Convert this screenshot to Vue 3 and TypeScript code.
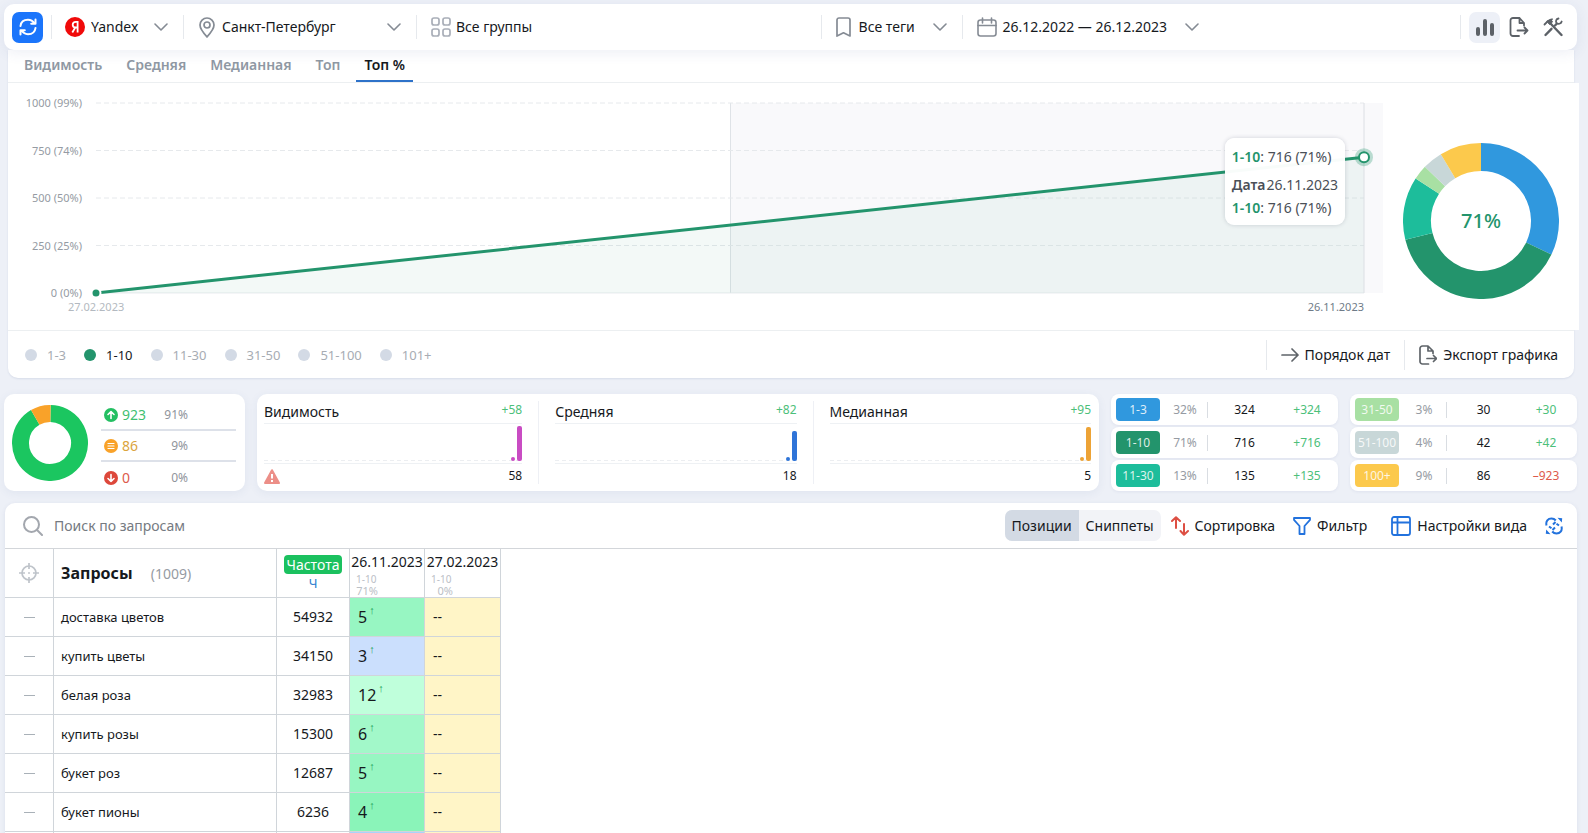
<script setup lang="ts">
import { ref } from 'vue'

const tabs = ['Видимость', 'Средняя', 'Медианная', 'Топ', 'Топ %']
const activeTab = ref('Топ %')

const axis = ['1000 (99%)', '750 (74%)', '500 (50%)', '250 (25%)', '0 (0%)']
const gridLines = ['0%', '25%', '50%', '75%']

const ranges = ['1-3', '1-10', '11-30', '31-50', '51-100', '101+']
const activeRange = ref('1-10')

interface Slice { color: string; from: number; to: number }

function arc(s: Slice, r: number): string {
  const point = (deg: number) => {
    const a = ((deg - 90) * Math.PI) / 180
    return `${(r * Math.cos(a)).toFixed(2)} ${(r * Math.sin(a)).toFixed(2)}`
  }
  return `M${point(s.from)} A${r} ${r} 0 ${s.to - s.from > 180 ? 1 : 0} 1 ${point(s.to)}`
}

const topSlices: Slice[] = [
  { color: '#3098de', from: 0, to: 115.5 },
  { color: '#23946c', from: 115.5, to: 256 },
  { color: '#1dbd9b', from: 256, to: 303 },
  { color: '#a8e0a3', from: 303, to: 314 },
  { color: '#c8d7d8', from: 314, to: 329 },
  { color: '#fcc94c', from: 329, to: 360 },
]
const changeSlices: Slice[] = [
  { color: '#1bc660', from: 1, to: 330 },
  { color: '#f9a229', from: 330, to: 361 },
]

const changes = [
  { kind: 'up', value: 923, share: '91%' },
  { kind: 'same', value: 86, share: '9%' },
  { kind: 'down', value: 0, share: '0%' },
]

const metrics = [
  { name: 'Видимость', delta: '+58', value: 58, height: 35, color: '#c94cc3', warn: true },
  { name: 'Средняя', delta: '+82', value: 18, height: 30, color: '#2f74d8', warn: false },
  { name: 'Медианная', delta: '+95', value: 5, height: 34, color: '#eda336', warn: false },
]

const groups = [
  [
    { label: '1-3', color: '#3098de', share: '32%', count: 324, delta: '+324' },
    { label: '1-10', color: '#23946c', share: '71%', count: 716, delta: '+716' },
    { label: '11-30', color: '#1dbd9b', share: '13%', count: 135, delta: '+135' },
  ],
  [
    { label: '31-50', color: '#a8e0a3', share: '3%', count: 30, delta: '+30' },
    { label: '51-100', color: '#c8d7d8', share: '4%', count: 42, delta: '+42' },
    { label: '100+', color: '#fcc94c', share: '9%', count: 86, delta: '–923' },
  ],
]

const mode = ref('Позиции')
const search = ref('')

const rows = [
  { query: 'доставка цветов', freq: 54932, pos: 5, color: '#97f6c2' },
  { query: 'купить цветы', freq: 34150, pos: 3, color: '#cbdffd' },
  { query: 'белая роза', freq: 32983, pos: 12, color: '#bfffdb' },
  { query: 'купить розы', freq: 15300, pos: 6, color: '#a2f8c9' },
  { query: 'букет роз', freq: 12687, pos: 5, color: '#97f6c2' },
  { query: 'букет пионы', freq: 6236, pos: 4, color: '#8af4b9' },
]
</script>

<template>
  <div class="page">
    <header class="topbar">
      <button class="refresh" type="button" aria-label="Обновить">
        <svg width="20" height="20" viewBox="0 0 20 20" fill="none" stroke="#fff" stroke-width="2" stroke-linecap="round" stroke-linejoin="round">
          <path d="M2.5 9C3 5 6 2.8 10 2.8c2.8 0 5 1.400 6.300 3.600M17.500 2.500v4.300h-4.300M17.500 11c-.5 4-3.500 6.200-7.500 6.200-2.800 0-5-1.400-6.300-3.600M2.500 17.500v-4.300h4.300" />
        </svg>
      </button>
      <i class="sep first"></i>
      <label class="picker engine">
        <svg width="20" height="20" viewBox="0 0 20 20">
          <circle cx="10" cy="10" r="10" fill="#f00a0a" />
          <path d="M12.600 15.500V4.800h-1.700c-2 0-3.200 1.100-3.200 2.900 0 1.700 1 2.800 3 2.800h1.700M10.300 10.500l-3 5" fill="none" stroke="#fff" stroke-width="1.800" />
        </svg>
        <select aria-label="Поисковая система"><option>Yandex</option></select>
        <svg class="chev" width="14" height="8" viewBox="0 0 14 8"><path d="M1 1l6 6 6-6" /></svg>
      </label>
      <i class="sep"></i>
      <label class="picker region">
        <svg width="16" height="21" viewBox="0 0 16 21" fill="none" stroke="#858b94" stroke-width="1.700">
          <path d="M8 19.800C4 15.500 1 11.800 1 8a7 7 0 0 1 14 0c0 3.800-3 7.500-7 11.800z" /><circle cx="8" cy="8" r="3" />
        </svg>
        <select aria-label="Регион"><option>Санкт-Петербург</option></select>
        <svg class="chev" width="14" height="8" viewBox="0 0 14 8"><path d="M1 1l6 6 6-6" /></svg>
      </label>
      <i class="sep"></i>
      <button class="plain groups" type="button">
        <svg width="20" height="20" viewBox="0 0 20 20" fill="none" stroke="#a9aeb8" stroke-width="1.700">
          <rect x="1" y="1" width="7" height="7" rx="2" /><rect x="12" y="1" width="7" height="7" rx="2" />
          <rect x="1" y="12" width="7" height="7" rx="2" /><rect x="12" y="12" width="7" height="7" rx="2" />
        </svg>
        Все группы
      </button>
      <div class="right-filters">
        <i class="sep"></i>
        <label class="picker tags">
          <svg width="15" height="20" viewBox="0 0 15 20" fill="none" stroke="#858b94" stroke-width="1.700" stroke-linejoin="round">
            <path d="M1 19V3a2 2 0 0 1 2-2h9a2 2 0 0 1 2 2v16l-6.500-3.200z" />
          </svg>
          <select aria-label="Теги"><option>Все теги</option></select>
          <svg class="chev" width="14" height="8" viewBox="0 0 14 8"><path d="M1 1l6 6 6-6" /></svg>
        </label>
        <i class="sep"></i>
        <button class="plain dates" type="button">
          <svg width="20" height="20" viewBox="0 0 20 20" fill="none" stroke="#858b94" stroke-width="1.600" stroke-linecap="round">
            <rect x="1" y="3" width="18" height="16" rx="2.500" /><path d="M1 8.500h18M5.500 1v5M14.500 1v5" />
          </svg>
          26.12.2022 — 26.12.2023
          <svg class="chev" width="14" height="8" viewBox="0 0 14 8"><path d="M1 1l6 6 6-6" /></svg>
        </button>
      </div>
      <div class="actions">
        <i class="sep"></i>
        <button class="tool on" type="button" aria-label="График">
          <svg width="20" height="20" viewBox="0 0 20 20" stroke="#5c6167" stroke-width="4" stroke-linecap="round"><path d="M3 12v5M10 4v13M17 8v9" /></svg>
        </button>
        <button class="tool" type="button" aria-label="Экспорт">
          <svg width="20" height="20" viewBox="0 0 20 20" fill="none" stroke="#5c6167" stroke-width="1.800" stroke-linecap="round" stroke-linejoin="round">
            <path d="M10 19H4a2.500 2.500 0 0 1-2.500-2.500v-13A2.500 2.500 0 0 1 4 1h6.500L15 6v2.500M10.500 1v5H15M8.500 13.500h10M15.500 10.500l3 3-3 3" />
          </svg>
        </button>
        <button class="tool" type="button" aria-label="Инструменты">
          <svg width="20" height="20" viewBox="0 0 20 20" fill="none" stroke="#5c6167" stroke-linecap="round">
            <path d="M7.500 6.500l11 11.500" stroke-width="2.400" /><path d="M1.500 7.500L4.500 4.500 9 2.200" stroke-width="1.800" /><path d="M4 4.500l2.500 3L9.500 5 8 2.500z" fill="#5c6167" stroke-width="1" />
            <path d="M2.500 18l6-6.200M12 8.500l1.500-1.500" stroke-width="2.400" /><path d="M15.500 1.500c-2.500.5-3 2.800-2 4.500 1.500 1.500 4.500 1 5.200-1.500" stroke-width="1.800" />
          </svg>
        </button>
      </div>
    </header>

    <section class="chart-card">
      <nav class="tabs">
        <button v-for="t in tabs" :key="t" type="button" :class="{ on: t === activeTab }" @click="activeTab = t">{{ t }}</button>
      </nav>
      <div class="chart">
        <div class="axis"><span v-for="a in axis" :key="a">{{ a }}</span></div>
        <div class="plot">
          <div class="band"></div>
          <svg class="lines" width="100%" height="190">
            <line v-for="g in gridLines" :key="g" x1="0" x2="100%" :y1="g" :y2="g" stroke="#e6e9ec" stroke-dasharray="5 3" />
            <line x1="0" x2="100%" y1="100%" y2="100%" stroke="#e9ecef" />
            <svg width="100%" height="100%" viewBox="0 0 100 100" preserveAspectRatio="none"><path d="M0 100L100 28.500V100z" fill="#23946c" fill-opacity=".055" /></svg>
            <line x1="100%" x2="100%" y1="0" y2="100%" stroke="#dcdfe4" />
            <line x1="0" x2="100%" y1="100%" y2="28.500%" stroke="#23946c" stroke-width="3" />
            <circle cx="0" cy="100%" r="4.500" fill="#23946c" stroke="#fff" stroke-width="2" />
            <circle cx="100%" cy="28.500%" r="9" fill="#23946c" fill-opacity=".3" />
            <circle cx="100%" cy="28.500%" r="5" fill="#fff" stroke="#23946c" stroke-width="2" />
          </svg>
          <div class="tip">
            <p><b>1-10</b>: 716 (71%)</p>
            <p class="day"><strong>Дата</strong><span>26.11.2023</span></p>
            <p><b>1-10</b>: 716 (71%)</p>
          </div>
          <div class="dates-axis"><span>27.02.2023</span><span>26.11.2023</span></div>
        </div>
        <svg class="donut" width="156" height="156" viewBox="-78 -78 156 156">
          <path v-for="s in topSlices" :key="s.color" :d="arc(s, 64)" fill="none" :stroke="s.color" stroke-width="28" />
          <text y="7" text-anchor="middle">71%</text>
        </svg>
      </div>
      <div class="legend">
        <button v-for="r in ranges" :key="r" type="button" class="range" :class="{ on: r === activeRange }" @click="activeRange = r"><i></i>{{ r }}</button>
        <div class="legend-actions">
          <i class="sep"></i>
          <button class="plain" type="button">
            <svg width="18" height="14" viewBox="0 0 18 14" fill="none" stroke="#5f6469" stroke-width="1.700" stroke-linecap="round" stroke-linejoin="round"><path d="M1 7h16M11 1l6 6-6 6" /></svg>
            Порядок дат
          </button>
          <i class="sep"></i>
          <button class="plain" type="button">
            <svg width="18" height="20" viewBox="0 0 18 20" fill="none" stroke="#5f6469" stroke-width="1.700" stroke-linecap="round" stroke-linejoin="round">
              <path d="M9.500 19H3.500A2.500 2.500 0 0 1 1 16.500v-13A2.500 2.500 0 0 1 3.500 1H9l5 5v2.500M9 1v5h5M8 13.500h9M14.500 10.500l3 3-3 3" />
            </svg>
            Экспорт графика
          </button>
        </div>
      </div>
    </section>

    <section class="stats">
      <div class="card changes">
        <svg width="76" height="76" viewBox="-38 -38 76 76">
          <path v-for="s in changeSlices" :key="s.color" :d="arc(s, 29.5)" fill="none" :stroke="s.color" stroke-width="17" />
        </svg>
        <ul>
          <li v-for="c in changes" :key="c.kind" :class="c.kind">
            <svg width="14" height="14" viewBox="0 0 14 14" fill="none" stroke="#fff" stroke-width="1.600" stroke-linecap="round" stroke-linejoin="round">
              <circle class="disc" cx="7" cy="7" r="7" stroke="none" />
              <path v-if="c.kind === 'up'" d="M7 10.500v-7M4 6.500l3-3 3 3" />
              <path v-else-if="c.kind === 'down'" d="M7 3.500v7M4 7.500l3 3 3-3" />
              <path v-else d="M4 4.500h6M4 7h6M4 9.500h6" stroke-width="1.200" />
            </svg>
            <span>{{ c.value }}</span><em>{{ c.share }}</em>
          </li>
        </ul>
      </div>

      <div class="card metrics">
        <div v-for="m in metrics" :key="m.name" class="metric">
          <div class="head"><h3>{{ m.name }}</h3><span>{{ m.delta }}</span></div>
          <div class="spark">
            <i class="dot" :style="{ background: m.color }"></i>
            <i class="bar" :style="{ background: m.color, height: m.height + 'px' }"></i>
          </div>
          <div class="foot">
            <svg v-if="m.warn" width="16" height="15" viewBox="0 0 16 15">
              <path d="M8 1.200L15 14H1z" fill="#ec8f88" stroke="#ec8f88" stroke-width="2" stroke-linejoin="round" />
              <path d="M8 5v4.500M8 11v2" stroke="#fff" stroke-width="2" />
            </svg>
            <span>{{ m.value }}</span>
          </div>
        </div>
      </div>

      <div v-for="(g, i) in groups" :key="i" class="group">
        <div v-for="x in g" :key="x.label" class="pill">
          <b :style="{ background: x.color }">{{ x.label }}</b>
          <em>{{ x.share }}</em>
          <strong>{{ x.count }}</strong>
          <span :class="{ minus: x.delta.startsWith('–') }">{{ x.delta }}</span>
        </div>
      </div>
    </section>

    <section class="queries">
      <div class="toolbar">
        <svg width="20" height="20" viewBox="0 0 20 20" fill="none" stroke="#a3a7ae" stroke-width="2" stroke-linecap="round"><circle cx="8.500" cy="8.500" r="7.500" /><path d="M14 14l5 5" /></svg>
        <input v-model="search" type="text" placeholder="Поиск по запросам" aria-label="Поиск по запросам" />
        <div class="switch">
          <button v-for="m in ['Позиции', 'Сниппеты']" :key="m" type="button" :class="{ on: m === mode }" @click="mode = m">{{ m }}</button>
        </div>
        <button class="plain sort" type="button">
          <svg width="18" height="20" viewBox="0 0 18 20" fill="none" stroke="#dd4f43" stroke-width="2" stroke-linecap="round" stroke-linejoin="round"><path d="M5 12V1.500M1 5l4-3.700L9 5M13 8v10.500M9.500 15l3.500 3.700L17 15" /></svg>
          Сортировка
        </button>
        <button class="plain filter" type="button">
          <svg width="18" height="18" viewBox="0 0 18 18" fill="none" stroke="#2272dd" stroke-width="1.800" stroke-linejoin="round"><path d="M1 1h16v1.800L11.500 9v8h-5V9L1 2.800z" /></svg>
          Фильтр
        </button>
        <button class="plain view" type="button">
          <svg width="20" height="20" viewBox="0 0 20 20" fill="none" stroke="#2272dd" stroke-width="1.800"><rect x="1" y="1" width="18" height="18" rx="2" /><path d="M1 6.500h18M6.500 1v18" /></svg>
          Настройки вида
        </button>
        <button class="plain" type="button" aria-label="Обновить вид">
          <svg width="18" height="18" viewBox="0 0 18 18" fill="none" stroke="#2272dd" stroke-width="2">
            <path d="M1.500 8.500C.5 4 3 1.500 6.500 1.500c2 0 3.300.8 4.300 2M4 9.500l2.500 1.800M8 7.500L10.500 5M16.500 9.500c1 4.500-1.500 7-5 7-2 0-3.300-.8-4.300-2M14 8.500l-2.500-1.800M10 10.500L7.500 13" />
            <path d="M12.500.8l4.700.4-.4 4.300zM5.500 17.200l-4.700-.4.400-4.300z" fill="#2272dd" stroke="none" />
          </svg>
        </button>
      </div>
      <table>
        <thead>
          <tr>
            <th class="c-mark">
              <svg width="20" height="20" viewBox="0 0 20 20" fill="none" stroke="#bfc4ca" stroke-width="1.700"><circle cx="10" cy="10" r="7" /><path d="M10 0v6M10 14v6M0 10h6M14 10h6" /><circle cx="10" cy="10" r="1" fill="#c3c7cc" stroke="none" /></svg>
            </th>
            <th class="c-query">Запросы <span>(1009)</span></th>
            <th class="c-freq"><b>Частота</b><a href="#">Ч</a></th>
            <th class="c-day first">26.11.2023<small>1-10</small><small class="pc">71%</small></th>
            <th class="c-day">27.02.2023<small>1-10</small><small class="pc">0%</small></th>
          </tr>
        </thead>
        <tbody>
          <tr v-for="r in rows" :key="r.query">
            <td class="c-mark"><i></i></td>
            <td class="c-query">{{ r.query }}</td>
            <td class="c-freq">{{ r.freq }}</td>
            <td class="c-pos" :style="{ background: r.color }">{{ r.pos }}<sup>↑</sup></td>
            <td class="c-none">--</td>
          </tr>
          <tr>
            <td class="c-mark"></td>
            <td class="c-query"></td>
            <td class="c-freq"></td>
            <td class="c-pos next"></td>
            <td class="c-none"></td>
          </tr>
        </tbody>
      </table>
    </section>
  </div>
</template>

<style>
body { overflow: hidden; background: #edf0f7; }
</style>

<style scoped>
* { box-sizing: border-box; margin: 0; }
.page { height: 100vh; overflow: hidden; padding: 4px 11px 0 4px; background: #edf0f7; font: 14px/20px "Noto Sans", "Open Sans", sans-serif; color: #16191d; }
button, select, input { font: inherit; color: inherit; border: 0; background: none; padding: 0; }
button { cursor: pointer; white-space: nowrap; }
svg { display: block; flex: none; }
em { font-style: normal; }

.topbar { position: relative; z-index: 2; display: flex; align-items: center; height: 46px; padding: 0 14px 0 8px; border-radius: 10px; background: #fff; box-shadow: 0 3px 14px rgba(60, 80, 140, .09); }
.refresh { display: grid; place-items: center; width: 31px; height: 31px; border-radius: 7px; background: #1b75fb; }
.sep { flex: none; width: 1px; height: 24px; margin: 0 15px; background: #e6e9ed; }
.sep.first { margin: 0 13px 0 8px; }
.picker { position: relative; display: flex; align-items: center; gap: 7px; }
.picker select { flex: 1; min-width: 0; appearance: none; outline: 0; }
.engine { width: 103px; gap: 6px; }
.region { width: 202px; }
.tags { width: 111px; gap: 8px; }
.chev { fill: none; stroke: #858b94; stroke-width: 1.600; stroke-linecap: round; stroke-linejoin: round; }
.picker .chev { position: absolute; right: 0; pointer-events: none; }
.plain { display: flex; align-items: center; gap: 6px; }
.groups { margin-left: -1px; gap: 5px; }
.right-filters, .actions { display: flex; align-items: center; }
.right-filters { margin-left: auto; }
.right-filters .sep { margin-right: 14px; }
.dates .chev { margin-left: 12px; }
.actions { margin-left: 246px; gap: 3px; }
.actions .sep { margin-right: 5px; }
.tool { display: grid; place-items: center; width: 31px; height: 31px; border-radius: 7px; }
.tool.on { background: #edf0f7; }
.tool:last-child { width: 32px; margin-right: -6px; }

.chart-card { position: relative; margin: 0 3px 0 4px; border-radius: 0 0 10px 10px; background: #fff; box-shadow: 0 1px 2px rgba(60, 80, 140, .12); }
.tabs { display: flex; gap: 8px; height: 33px; padding-left: 8px; border-bottom: 1px solid #eceff1; }
.tabs button { padding: 0 8px; font-weight: 600; color: #8f98a3; border-bottom: 2px solid transparent; }
.tabs button.on { color: #16191d; border-color: #2e72c9; }
.chart { display: flex; align-items: flex-start; height: 247px; margin-right: -5px; padding: 20px 20px 0 0; background: #fff; }
.axis { display: flex; flex-direction: column; justify-content: space-between; width: 74px; height: 206px; margin-top: -8px; text-align: right; font-size: 11px; line-height: 16px; color: #959ba3; }
.plot { position: relative; flex: 1; height: 190px; margin-left: 14px; }
.band { position: absolute; top: 0; bottom: 0; left: 50%; right: -19px; background: #f9f9fb; border-left: 1px solid #dfe3e7; }
.lines { position: relative; overflow: visible; }
.tip { position: absolute; top: 35px; right: 19px; padding: 7px 7px 6px; border-radius: 9px; background: rgba(255, 255, 255, .97); box-shadow: 0 0 4px rgba(60, 70, 90, .22); line-height: 23px; color: #4a4f57; white-space: nowrap; }
.tip b { font-weight: 600; color: #23946c; }
.tip .day { margin-top: 5px; }
.tip strong { margin-right: 1px; font-weight: 600; }
.dates-axis { display: flex; justify-content: space-between; margin: 6px 0 0 -28px; font-size: 11px; line-height: 16px; color: #b3b9c0; }
.dates-axis span:last-child { color: #6f7b88; }
.donut { margin: 40px 0 0 39px; }
.donut text { font-size: 20px; font-weight: 500; fill: #23946c; }
.legend { display: flex; align-items: center; gap: 18px; height: 48px; padding: 0 16px 0 17px; border-top: 1px solid #eceff1; }
.range { display: flex; align-items: center; gap: 10px; font-size: 13px; color: #a7acb3; }
.range i { width: 12px; height: 12px; border-radius: 50%; background: #d3dae5; }
.range.on { color: #16191d; }
.range.on i { background: #23946c; }
.legend-actions { display: flex; align-items: center; margin-left: auto; }
.legend-actions .sep { height: 30px; margin: 0 14px; }

.stats { display: flex; gap: 12px; margin-top: 16px; height: 97px; }
.card { border-radius: 10px; background: #fff; box-shadow: 0 2px 10px rgba(60, 80, 140, .07); }
.changes { display: flex; align-items: center; gap: 13px; width: 241px; padding: 0 9px 0 8px; }
.changes ul { flex: 1; padding: 8px 0 0; list-style: none; }
.changes li { display: flex; align-items: center; height: 31px; padding-left: 3px; border-bottom: 2px solid #dde1e9; }
.changes li:last-child { border: 0; }
.changes span { flex: none; width: 40px; margin-left: 4px; }
.changes em { width: 26px; text-align: right; font-size: 12px; color: #8f949b; }
.up { color: #3fbf71; } .up .disc { fill: #24bf62; }
.same { color: #dba43c; } .same .disc { fill: #f9a229; }
.down { color: #dd5a4b; } .down .disc { fill: #dd483b; }

.metrics { display: flex; flex: 1; padding: 7px 8px 7px 7px; }
.metric { flex: 1 1 auto; }
.metric + .metric { margin-left: 16px; padding-left: 16px; border-left: 1px solid #eef0f5; }
.head { display: flex; justify-content: space-between; height: 23px; border-bottom: 1px solid #eef1f4; }
.head h3 { font-size: 14px; font-weight: 400; line-height: 22px; }
.head span { font-size: 12px; line-height: 17px; color: #4cc07a; }
.spark { display: flex; align-items: flex-end; justify-content: flex-end; gap: 2px; height: 40px; padding-bottom: 2px; border-bottom: 1px solid #eef1f4; background: repeating-linear-gradient(90deg, #eceef1 0 4px, transparent 4px 7px) 0 36px / 100% 1px no-repeat; }
.dot { width: 4px; height: 4px; border-radius: 50%; }
.bar { width: 5px; border-radius: 2px; }
.foot { display: flex; align-items: center; height: 24px; }
.foot span { margin-left: auto; font-size: 12px; }

.group { display: grid; gap: 2px; width: 227px; }
.pill { display: grid; grid-template-columns: 44px 48px 73px 52px; align-items: center; padding-left: 5px; border-radius: 8px; background: #fff; box-shadow: 0 1px 3px rgba(60, 80, 140, .08); font-size: 12px; text-align: center; }
.pill b { height: 23px; border-radius: 4px; font-weight: 400; line-height: 23px; color: rgba(255, 255, 255, .85); }
.pill em { height: 16px; padding-left: 3px; border-right: 1px solid #d9dde2; line-height: 16px; color: #969ba3; }
.pill strong { font-weight: 400; }
.pill span { color: #4cc07a; }
.pill span.minus { color: #dd5a4b; }

.queries { margin: 12px 0 0 1px; border-radius: 10px 10px 0 0; background: #fff; box-shadow: 0 1px 4px rgba(60, 80, 140, .1); }
.toolbar { display: flex; align-items: center; height: 46px; padding: 0 14px 0 18px; border-bottom: 1px solid #d3d6da; }
.toolbar input { flex: 1; margin-left: 11px; outline: 0; }
.toolbar input::placeholder { color: #757a81; opacity: 1; }
.switch { display: flex; overflow: hidden; height: 31px; border-radius: 7px; background: #f2f3f7; }
.switch button { padding: 0 7px; }
.switch .on { background: #d3dae4; }
.sort { margin-left: 10px; }
.filter { margin-left: 18px; }
.view { margin: 0 18px 0 24px; }

table { width: 496px; table-layout: fixed; border-collapse: separate; border-spacing: 0; }
th, td { padding: 0; border-right: 1px solid #d0d5da; border-bottom: 1px solid #d0d5da; font-weight: 400; }
th { height: 49px; }
td { height: 39px; }
.c-mark { width: 49px; }
.c-mark svg, .c-mark i { display: block; margin: 0 auto; }
.c-mark i { width: 11px; height: 1px; background: #a9b1b8; }
.c-query { width: 223px; padding-left: 7px; text-align: left; font-size: 13px; }
th.c-query { font-size: 16px; font-weight: 700; }
th span { margin-left: 14px; font-size: 14px; font-weight: 400; color: #969ba3; }
.c-freq { width: 73px; text-align: center; }
.c-freq b { display: block; width: 58px; margin: 0 auto; border-radius: 4px; background: #1bc15f; font-weight: 400; line-height: 19px; color: #fff; }
.c-freq a { display: block; font-size: 13px; line-height: 18px; color: #2f7fd0; text-decoration: none; }
.c-day { padding-top: 3px; vertical-align: top; text-align: center; }
.c-day.first { width: 75px; }
.c-day small { display: block; margin-top: 2px; padding-left: 6px; font-size: 10px; line-height: 11px; color: #bbc0c6; text-align: left; }
.c-day .pc { width: 28px; margin: 0; font-size: 11px; text-align: right; }
.c-pos { padding-left: 8px; font-size: 16px; }
.c-pos.next { background: #a9d2fb; }
.c-pos sup { margin-left: 2px; font-size: 11px; line-height: 0; vertical-align: 9px; color: #23a35c; }
.c-none { padding-left: 8px; background: #fff5c7; }
</style>
